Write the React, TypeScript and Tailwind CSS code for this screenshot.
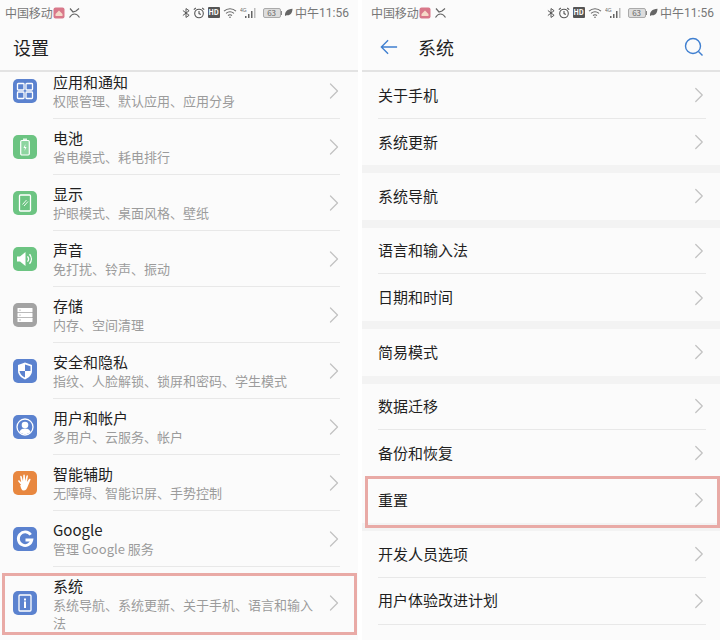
import { ReactNode } from "react";
import { ChevronRight } from "lucide-react";

const cjk = { fontFamily: '"Noto Sans CJK SC", "Noto Sans", sans-serif' };

function StatusBar({ className }: { className: string }) {
  return (
    <div className={`flex h-[25px] items-center justify-between text-[12px] text-[#777] ${className}`}>
      <div className="flex items-center">
        <span className="tracking-[-0.1px]">中国移动</span>
        <svg width="12" height="12" viewBox="0 0 12 12">
          <rect width="11" height="11" x="0.5" y="0.5" rx="2" fill="#d9788a" />
          <path d="M2.5 7 6 3.5 9.500 7v2h-7z" fill="#f6d9c8" />
        </svg>
        <svg className="ml-[3px]" width="13" height="12" viewBox="0 0 13 12" fill="none" stroke="#666" strokeWidth="1.2">
          <path d="M2 1.500 5 5l3-1 3-2.500M1.500 10.500C3 8 5 7 6.500 7s3.500 1 5 3.500" />
        </svg>
      </div>
      <div className="flex items-center">
        <svg width="8" height="12" viewBox="0 0 9 12" fill="none" stroke="#555" strokeWidth="1.100">
          <path d="M1 3.200 8 8.600 4.500 11V1L8 3.400 1 8.800" />
        </svg>
        <svg className="ml-[3px]" width="12" height="12" viewBox="0 0 12 12" fill="none" stroke="#555" strokeWidth="1.100">
          <circle cx="6" cy="6.500" r="4.300" />
          <path d="M6 4v2.600l1.800 1M.8 2.600 2.800 1M11.200 2.600 9.200 1" />
        </svg>
        <span className="ml-[3px] flex h-[11px] w-[12px] items-center justify-center rounded-[1px] bg-[#555] text-[7px] font-bold leading-none text-white">HD</span>
        <svg className="ml-[3px]" width="14" height="12" viewBox="0 0 14 12" fill="none" stroke="#666" strokeWidth="1.100">
          <path d="M1 4.200C4.500 1 9.500 1 13 4.200M3 6.400c2.500-2 5.500-2 8 0M5 8.500c1.300-1 2.700-1 4 0" />
          <circle cx="7" cy="10.300" r="0.800" fill="#666" stroke="none" />
        </svg>
        <svg className="ml-[3px]" width="17" height="12" viewBox="0 0 17 12" fill="#666">
          <text x="0" y="4.500" fontSize="5" fontFamily="Liberation Sans, sans-serif">4G</text>
          <rect x="5" y="9" width="1.500" height="2" />
          <rect x="8" y="7" width="1.500" height="4" />
          <rect x="11" y="4" width="1.500" height="7" />
          <rect x="14" y="1" width="1.500" height="10" fill="#bbb" />
        </svg>
        <span className="ml-[6px] flex h-[10px] w-[18px] items-center justify-center rounded-[2px] border border-[#aaa] bg-[#ddd] text-[8px] leading-none text-[#666]">63</span>
        <span className="h-[4px] w-[1.500px] bg-[#888]" />
        <svg className="ml-[2px]" width="9" height="9" viewBox="0 0 9 9">
          <path d="M1 8C.5 4 3 1 8.500.8 8.500 5 6 8 2.500 7.200z" fill="#666" />
        </svg>
        <span className="ml-[2px]">中午</span>
        <span style={{ fontFamily: "Roboto, sans-serif" }}>11:56</span>
      </div>
    </div>
  );
}

function Header({ children }: { children: ReactNode }) {
  return <div className="flex h-[47px] items-center border-b-[2px] border-[#e3e3e3] pb-[1px]">{children}</div>;
}

function IconBox({ color, children }: { color: string; children: ReactNode }) {
  return (
    <div className={`flex h-[24px] w-[24px] shrink-0 items-center justify-center rounded-[5px] ${color}`}>
      <svg width="18" height="18" viewBox="0 0 18 18" fill="none">
        {children}
      </svg>
    </div>
  );
}

const blue = "bg-[#5b82cf]";
const green = "bg-[#6cc482]";

const settings = [
  {
    title: "应用和通知",
    sub: "权限管理、默认应用、应用分身",
    color: blue,
    icon: (
      <g stroke="#fff" strokeWidth="1.300">
        <rect x="1.500" y="1.500" width="6.500" height="6.500" rx="0.800" />
        <rect x="10" y="1.500" width="6.500" height="6.500" rx="0.800" />
        <rect x="1.500" y="10" width="6.500" height="6.500" rx="0.800" />
        <rect x="10" y="10" width="6.500" height="6.500" rx="0.800" />
      </g>
    ),
  },
  {
    title: "电池",
    sub: "省电模式、耗电排行",
    color: green,
    icon: (
      <g>
        <rect x="7" y="0.500" width="4" height="2" fill="#e4f5e8" />
        <rect x="4.700" y="2.500" width="8.600" height="14.500" rx="1.200" stroke="#fff" strokeWidth="1.200" fill="#8ed5a0" />
        <path d="M9.500 6 7.500 10h1.500L8.500 13l2-4H9z" fill="#fff" />
      </g>
    ),
  },
  {
    title: "显示",
    sub: "护眼模式、桌面风格、壁纸",
    color: green,
    icon: (
      <g stroke="#fff">
        <rect x="3.500" y="1" width="11" height="16" rx="1" strokeWidth="1.300" />
        <path d="M6.500 10.500 10.500 6M8 12l4-4.500" strokeWidth="0.900" />
      </g>
    ),
  },
  {
    title: "声音",
    sub: "免打扰、铃声、振动",
    color: green,
    icon: (
      <g>
        <path d="M1 6.500h3L9.500 2v14L4 11.500H1z" fill="#fff" />
        <path d="M11.500 6.300c1.300 1.600 1.300 3.800 0 5.400M13.500 4.300c2.500 2.800 2.500 6.600 0 9.400" stroke="#fff" strokeWidth="1.300" />
      </g>
    ),
  },
  {
    title: "存储",
    sub: "内存、空间清理",
    color: "bg-[#a3a3a3]",
    icon: (
      <g>
        <rect x="1.500" y="2" width="15" height="4.200" rx="0.500" fill="#fff" />
        <rect x="1.500" y="6.900" width="15" height="4.200" rx="0.500" fill="#fff" />
        <rect x="1.500" y="11.800" width="15" height="4.200" rx="0.500" fill="#fff" />
        <circle cx="4" cy="4.100" r="0.600" fill="#888" />
        <circle cx="4" cy="9" r="0.600" fill="#888" />
        <circle cx="4" cy="13.900" r="0.600" fill="#888" />
      </g>
    ),
  },
  {
    title: "安全和隐私",
    sub: "指纹、人脸解锁、锁屏和密码、学生模式",
    color: blue,
    icon: (
      <g>
        <path d="M9 .500 16 3v6c0 4-3.500 7-7 8.500C5.500 16 2 13 2 9V3z" fill="#fff" />
        <path d="M9 2.500V9H3.500c.3 3 3 5.300 5.500 6.500V9h5.500V4.300z" fill="#5b82cf" />
      </g>
    ),
  },
  {
    title: "用户和帐户",
    sub: "多用户、云服务、帐户",
    color: blue,
    icon: (
      <g>
        <circle cx="9" cy="9" r="8" stroke="#fff" strokeWidth="1.300" />
        <circle cx="9" cy="7" r="3.300" fill="#fff" />
        <path d="M3.500 14c1-3 3.500-3.500 5.500-3.500s4.500.5 5.500 3.500c-3 2.700-8 2.700-11 0z" fill="#fff" />
      </g>
    ),
  },
  {
    title: "智能辅助",
    sub: "无障碍、智能识屏、手势控制",
    color: "bg-[#e8873f]",
    icon: (
      <path
        d="M5.200 11 2.300 7.500c-.7-.9.500-1.800 1.200-1L5.200 8.300 4.200 2.700c-.2-1.100 1.300-1.400 1.500-.3L7 7 7.300 1.300c0-1.100 1.500-1.100 1.500 0L9.200 7l1.200-5.100c.3-1 1.700-.7 1.500.4L10.900 8l2.200-3c.7-.9 1.900 0 1.300 1l-2.900 7c-.6 1.800-1.700 3.500-3.800 3.500-2 0-2.800-2-3.500-5.500z"
        fill="#fff"
      />
    ),
  },
  {
    title: "Google",
    sub: "管理 Google 服务",
    color: blue,
    icon: <path d="M14.700 4.800A6.800 6.800 0 1 0 15.800 10H9.500" stroke="#fff" strokeWidth="2.800" />,
  },
];

function Chevron() {
  return <ChevronRight className="mr-[-8px] shrink-0 text-[#c2c2c2]" size={28} strokeWidth={1.100} />;
}

function SettingRow({ item, first }: { item: (typeof settings)[number]; first?: boolean }) {
  return (
    <div className={`flex h-[56px] items-center pl-[13px] pr-[18px] ${first ? "-mt-[9px]" : ""}`}>
      <IconBox color={item.color}>{item.icon}</IconBox>
      <div className="ml-[16px] flex h-full flex-1 items-center border-b border-[#e8e8e8]">
        <div className="flex-1">
          <div className="text-[15px] leading-[20px] text-[#1f1f1f]">{item.title}</div>
          <div className="text-[13px] leading-[18px] text-[#9b9b9b]">{item.sub}</div>
        </div>
        <Chevron />
      </div>
    </div>
  );
}

const systemGroups = [
  ["关于手机", "系统更新"],
  ["系统导航"],
  ["语言和输入法", "日期和时间"],
  ["简易模式"],
  ["数据迁移", "备份和恢复", "重置"],
  ["开发人员选项", "用户体验改进计划"],
];

function SystemRow({ title, border }: { title: string; border: boolean }) {
  return (
    <div className="ml-[16px] mr-[14px] flex h-[46.600px] items-center">
      <div className={`flex h-full flex-1 items-center ${border ? "border-b border-[#e8e8e8]" : ""}`}>
        <span className="flex-1 text-[15px] text-[#1f1f1f]">{title}</span>
        <ChevronRight className="mr-[-6px] text-[#c2c2c2]" size={26} strokeWidth={1.150} />
      </div>
    </div>
  );
}

export default function App() {
  return (
    <div className="flex h-[640px] w-[720px] overflow-hidden bg-white" style={cjk}>
      <div className="relative h-full w-[358px] shrink-0 overflow-hidden bg-[#fbfbfb]">
        <StatusBar className="pl-[5px] pr-[9px]" />
        <Header>
          <span className="pl-[13px] text-[18px] text-[#1f1f1f]">设置</span>
        </Header>
        {settings.map((item, i) => (
          <SettingRow key={item.title} item={item} first={i === 0} />
        ))}
        <div className="flex h-[72px] items-center pl-[13px] pr-[18px]">
          <IconBox color={blue}>
            <g>
              <rect x="3" y="1" width="12" height="16" rx="1" stroke="#fff" strokeWidth="1.300" />
              <rect x="8" y="4.500" width="2" height="2" fill="#fff" />
              <rect x="8" y="7.500" width="2" height="6.500" fill="#fff" />
            </g>
          </IconBox>
          <div className="ml-[16px] flex flex-1 items-center">
            <div className="flex-1 pt-[2px]">
              <div className="text-[15px] leading-[20px] text-[#1f1f1f]">系统</div>
              <div className="text-[13px] leading-[18px] text-[#9b9b9b]">系统导航、系统更新、关于手机、语言和输入法</div>
            </div>
            <Chevron />
          </div>
        </div>
        <div className="absolute left-[2px] top-[573px] h-[62px] w-[355px] border-[3px] border-[#e9aaa6]" />
      </div>
      <div className="relative ml-[4px] h-full flex-1 overflow-hidden bg-[#fbfbfb]">
        <StatusBar className="pl-[9px] pr-[6px]" />
        <Header>
          <svg className="ml-[18px]" width="18" height="18" viewBox="0 0 20 18" fill="none" stroke="#3f7fd0" strokeWidth="1.500">
            <path d="M19 9H1.500M9 1.500 1.500 9 9 16.500" />
          </svg>
          <span className="ml-[20px] flex-1 text-[18px] text-[#1f1f1f]">系统</span>
          <svg className="mr-[16px]" width="20" height="20" viewBox="0 0 20 20" fill="none" stroke="#3f7fd0" strokeWidth="1.400">
            <circle cx="9" cy="9" r="7.500" />
            <path d="m14.500 14.500 4 4" />
          </svg>
        </Header>
        {systemGroups.map((group, i) => (
          <div key={group[0]}>
            {i > 0 && <div className="h-[8px] bg-[#f3f3f3]" />}
            {group.map((title, j) => (
              <SystemRow key={title} title={title} border={j < group.length - 1 || i === systemGroups.length - 1} />
            ))}
          </div>
        ))}
        <div className="absolute left-[3px] top-[476px] h-[52px] w-[355px] border-[3px] border-[#e9aaa6]" />
      </div>
    </div>
  );
}
